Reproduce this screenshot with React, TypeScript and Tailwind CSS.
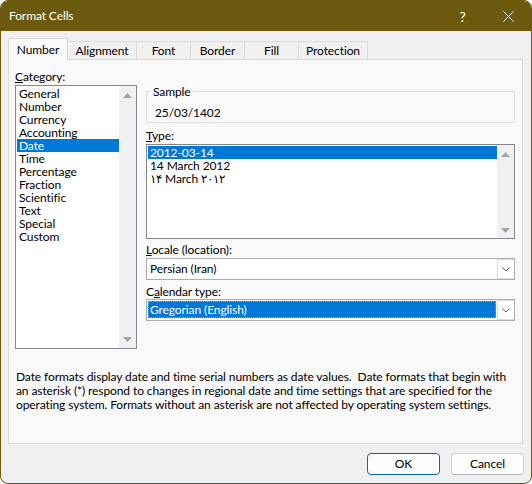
import React from "react";

const categories = [
  "General",
  "Number",
  "Currency",
  "Accounting",
  "Date",
  "Time",
  "Percentage",
  "Fraction",
  "Scientific",
  "Text",
  "Special",
  "Custom",
];

const types = ["2012-03-14", "14 March 2012", "۱۴ March ۲۰۱۲"];

const Arrow = ({ up }: { up?: boolean }) => (
  <svg width="9" height="5" viewBox="0 0 9 5" className="block">
    <polygon points={up ? "0,5 4.5,0 9,5" : "0,0 9,0 4.5,5"} fill="#a3a3a3" />
  </svg>
);

const Chevron = () => (
  <svg width="8" height="5" viewBox="0 0 8 5" className="block">
    <polyline points="0.5,0.5 4,4 7.5,0.5" fill="none" stroke="#606060" strokeWidth="1" />
  </svg>
);

const Tab = ({ label, width, active }: { label: string; width: string; active?: boolean }) => (
  <div
    className={
      active
        ? `${width} h-[22px] flex items-center justify-center border-x border-t border-[#d9d9d9] bg-[#f9f9f9] relative z-20`
        : `${width} h-[18px] mb-[1px] -ml-[1px] flex items-center justify-center border-x border-t border-[#dcdcdc] bg-[#f0f0f0] pt-[1px] relative z-10`
    }
  >
    {label}
  </div>
);

const Combo = ({ children }: { children: React.ReactNode }) => (
  <div className="h-[22px] flex border border-[#adadad] bg-white">
    <div className="flex-1 min-w-0 flex items-center">{children}</div>
    <div className="w-[17px] flex items-center justify-center border border-r-0 border-[#dcdcdc] bg-white">
      <Chevron />
    </div>
  </div>
);

export default function App() {
  return (
    <div className="w-[532px] h-[484px] flex flex-col overflow-hidden rounded-[8px] border border-[#6b5a0d] bg-[#f0f0f0] text-[12px] tracking-[-0.1px] text-black font-['Lato','Noto_Sans',sans-serif]">
      {/* title bar */}
      <div className="h-[30px] shrink-0 flex items-center bg-[#6b5a0d] text-white">
        <div className="pl-[8px] flex-1 text-[12px]">Format Cells</div>
        <div className="w-[45px] h-full flex items-center justify-center text-[14px]">?</div>
        <div className="w-[46px] h-full flex items-center justify-center">
          <svg width="11" height="11" viewBox="0 0 11 11">
            <path d="M0.5 0.5 L10.5 10.5 M10.5 0.5 L0.5 10.5" stroke="#fff" strokeWidth="1" />
          </svg>
        </div>
      </div>

      <div className="flex-1 flex flex-col pl-[7px] pr-[8px]">
        {/* tabs */}
        <div className="mt-[7px] h-[22px] -mb-[1px] flex items-end relative z-10">
          <Tab label="Number" width="w-[60px]" active />
          <Tab label="Alignment" width="w-[70px]" />
          <Tab label="Font" width="w-[55px]" />
          <Tab label="Border" width="w-[55px]" />
          <Tab label="Fill" width="w-[55px]" />
          <Tab label="Protection" width="w-[70px]" />
        </div>

        {/* tab page */}
        <div className="h-[385px] flex flex-col border border-[#dadada] bg-[#f9f9f9] px-[6px] pt-[9px]">
          <div className="flex">
            {/* category */}
            <div className="w-[122px] shrink-0">
              <div className="h-[15px] leading-[15px]">
                <span className="underline">C</span>ategory:
              </div>
              <div className="mt-[1px] h-[264px] flex border border-[#828790] bg-white pl-[1px]">
                <div className="w-[102px] pt-[1px]">
                  {categories.map((c) => (
                    <div
                      key={c}
                      className={`h-[13px] leading-[13px] pl-[2px] ${c === "Date" ? "bg-[#0078d7] text-white" : ""}`}
                    >
                      {c}
                    </div>
                  ))}
                </div>
                <div className="w-[17px] flex flex-col items-center justify-between bg-[#f0f0f0] pt-[7px] pb-[6px]">
                  <Arrow up />
                  <Arrow />
                </div>
              </div>
            </div>

            {/* right side */}
            <div className="ml-[9px] w-[369px] shrink-0">
              <fieldset className="mt-[15px] border border-[#dcdcdc] pt-[6px] pb-[2px]">
                <legend className="ml-[4px] px-[2px] h-[15px] leading-[15px]">Sample</legend>
                <div className="h-[15px] leading-[15px] pl-[8px]">25/03/1402</div>
              </fieldset>

              <div className="mt-[5px] h-[15px] leading-[15px]">
                <span className="underline">T</span>ype:
              </div>
              <div className="mt-[1px] h-[95px] flex border border-[#828790] bg-white pl-[1px]">
                <div className="w-[349px] pt-[1px]">
                  {types.map((t, i) => (
                    <div
                      key={t}
                      className={`h-[13px] leading-[13px] pl-[2px] ${i === 0 ? "bg-[#0078d7] text-white" : ""}`}
                    >
                      {t}
                    </div>
                  ))}
                </div>
                <div className="w-[17px] flex flex-col items-center justify-between bg-[#f0f0f0] pt-[7px] pb-[5px]">
                  <Arrow up />
                  <Arrow />
                </div>
              </div>

              <div className="mt-[3px] h-[15px] leading-[15px]">
                <span className="underline">L</span>ocale (location):
              </div>
              <div className="mt-[1px]">
                <Combo>
                  <span className="pl-[3px]">Persian (Iran)</span>
                </Combo>
              </div>

              <div className="mt-[4px] h-[15px] leading-[15px]">
                C<span className="underline">a</span>lendar type:
              </div>
              <Combo>
                <div className="ml-[1px] mr-[1px] mb-[1px] h-[17px] w-full flex items-center border border-dotted border-[#ff8728] bg-[#0078d7] pl-[1px] text-white">
                  Gregorian (English)
                </div>
              </Combo>
            </div>
          </div>

          <p className="mt-[21px] pl-[1px] leading-[14px] whitespace-nowrap">
            Date formats display date and time serial numbers as date values.&nbsp; Date formats that begin with
            <br />
            an asterisk (*) respond to changes in regional date and time settings that are specified for the
            <br />
            operating system. Formats without an asterisk are not affected by operating system settings.
          </p>
        </div>

        {/* buttons */}
        <div className="mt-[9px] -mr-[1px] flex justify-end gap-[11px]">
          <button className="w-[73px] h-[22px] rounded-[4px] border border-[#0067c0] bg-[#fdfdfd] leading-none">
            OK
          </button>
          <button className="w-[73px] h-[22px] rounded-[4px] border border-[#d0d0d0] border-b-[#b8b8b8] bg-[#fdfdfd] leading-none">
            Cancel
          </button>
        </div>
      </div>
    </div>
  );
}
